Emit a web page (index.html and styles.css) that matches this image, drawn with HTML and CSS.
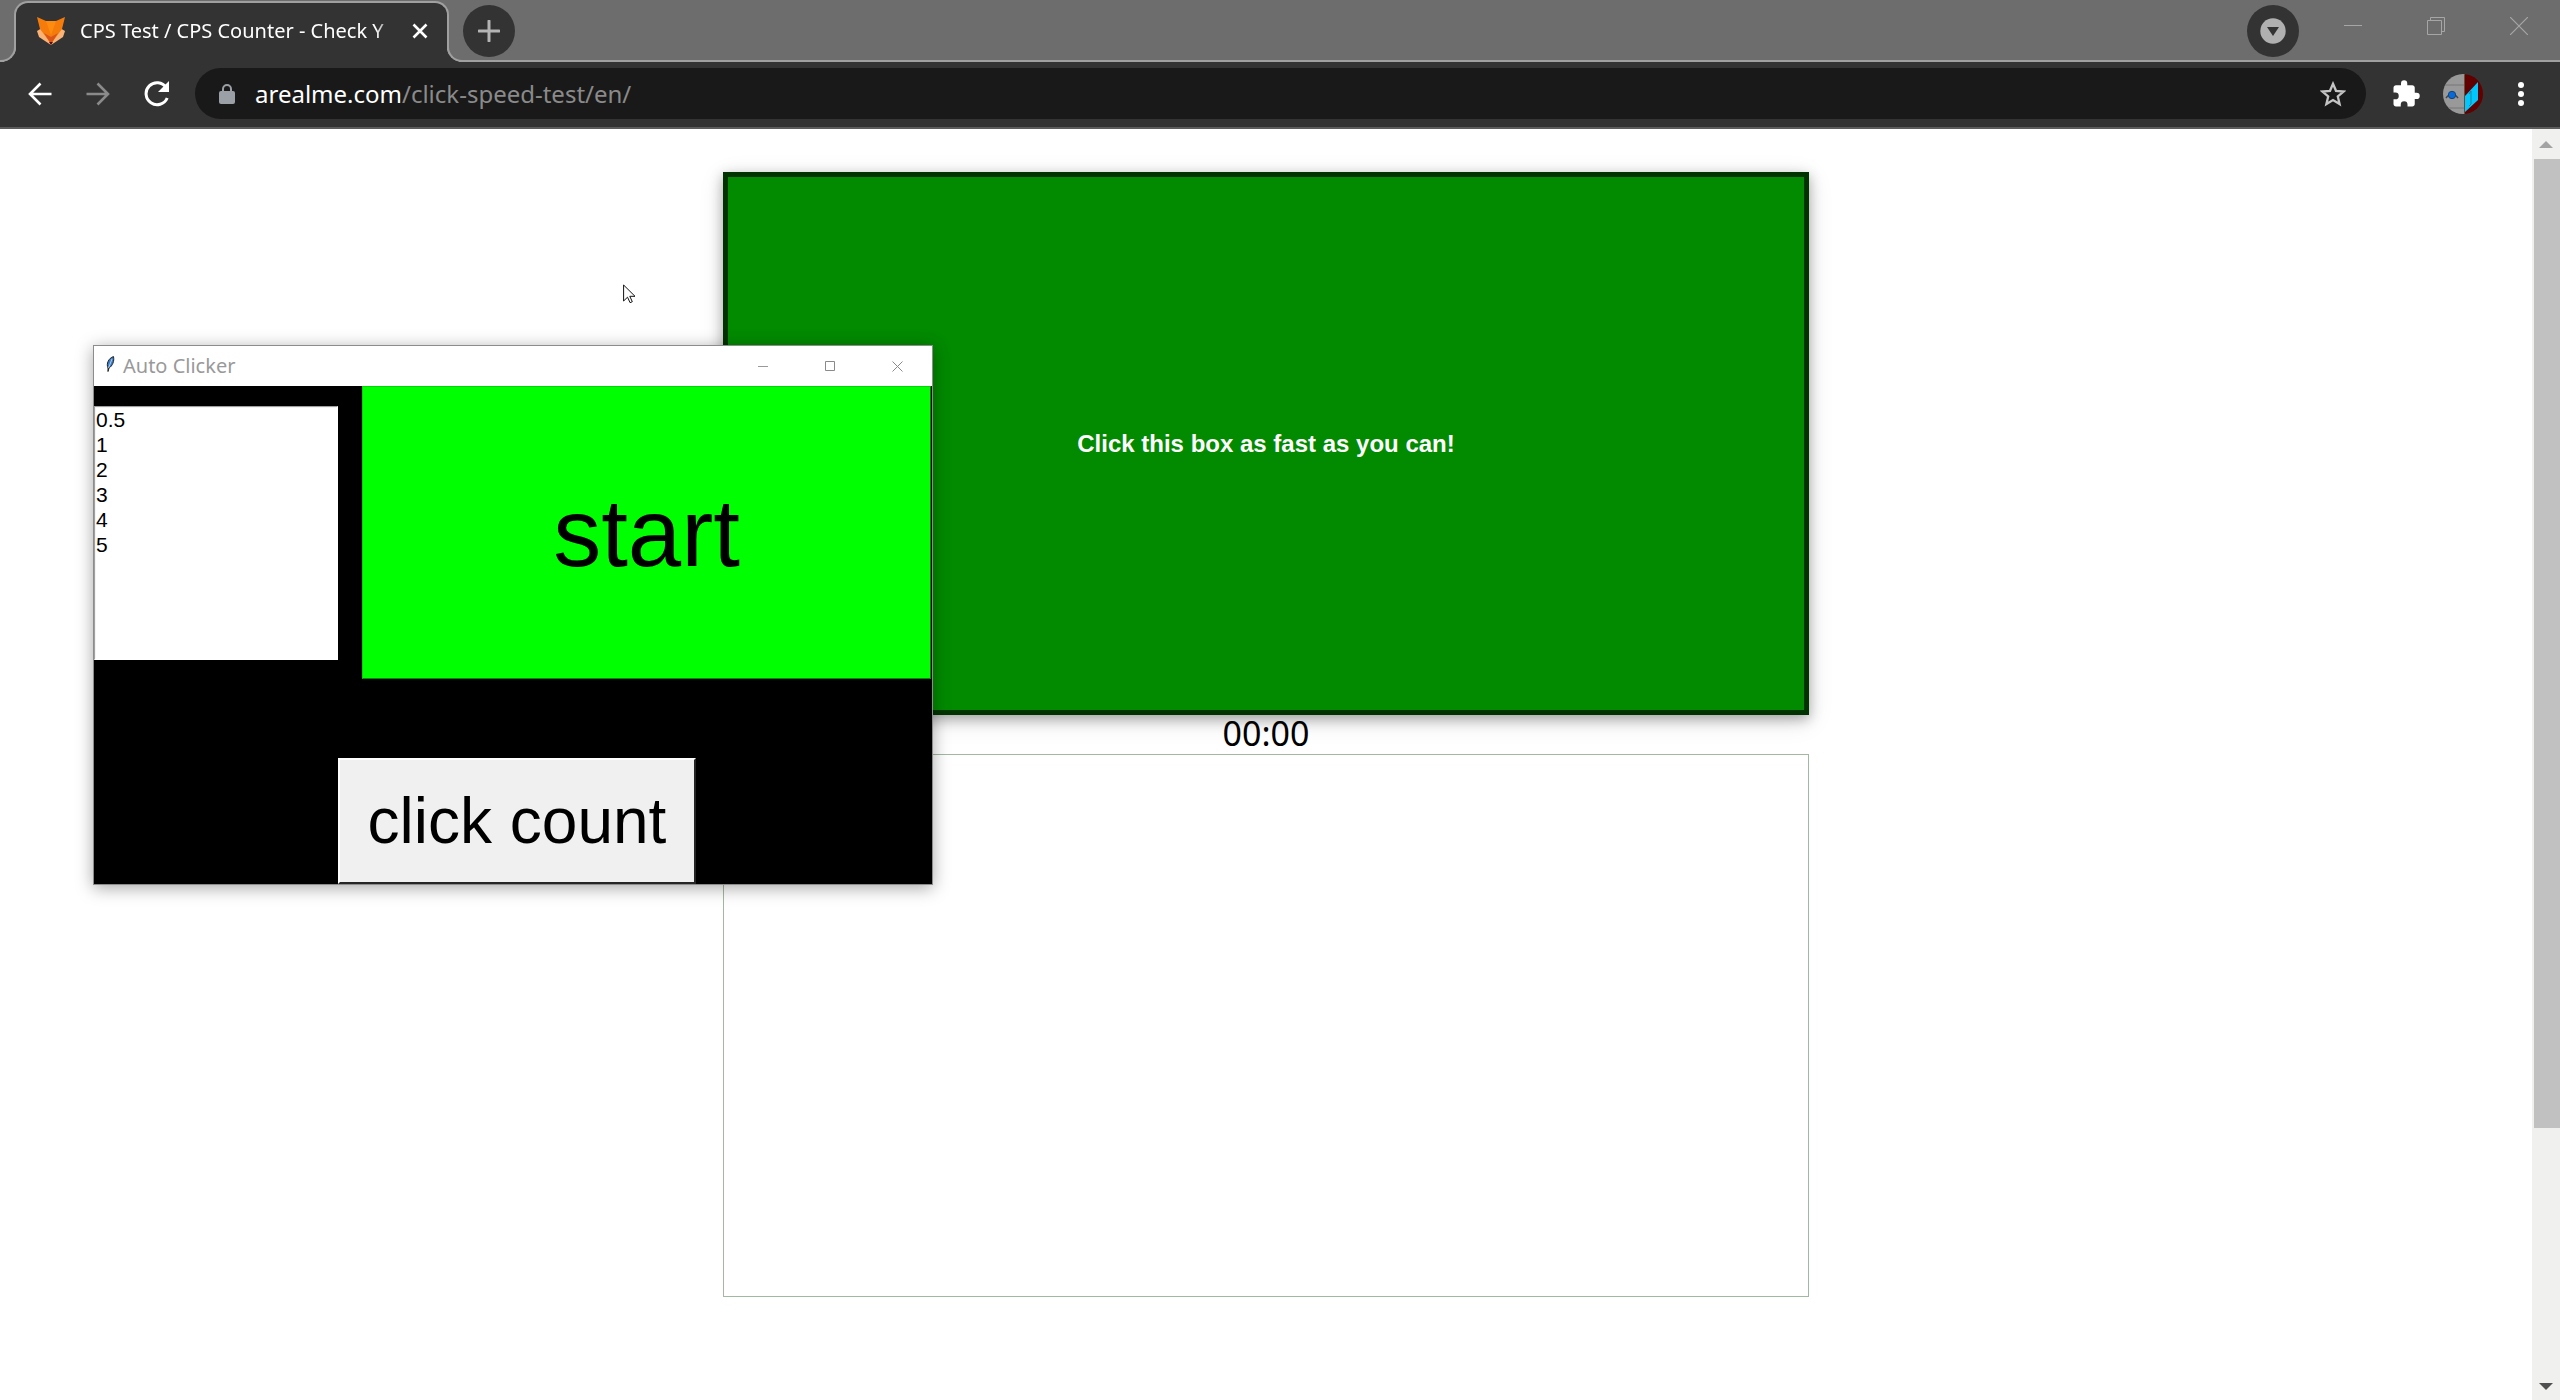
FILE: index.html
```html
<!DOCTYPE html>
<html lang="en">
<head>
<meta charset="utf-8">
<title>CPS Test / CPS Counter</title>
<link rel="stylesheet" href="styles.css">
</head>
<body>
<header class="browser">
  <div class="tabstrip">
    <div class="tab">
      <svg class="favicon" viewBox="0 0 30 28" width="30" height="28" aria-hidden="true">
        <path d="M1 14L6 11h18l5 3-2 6-12 8L3 20z" fill="#f9b377"/>
        <path d="M1 0l9 4h10l9-4-3 12-6 8-5 7-5-7-6-8z" fill="#f57c0a"/>
        <path d="M10 4h10l-5 14z" fill="#ff8c10"/>
        <path d="M8 16l5 8 2 3 2-3 5-8-7 4z" fill="#d9541a"/>
        <path d="M13 25h4l-2 3z" fill="#5a0d0d"/>
      </svg>
      <span class="tab-title">CPS Test / CPS Counter - Check Y</span>
      <button class="icon-btn tab-close" aria-label="Close tab"><svg viewBox="0 0 16 16" width="16" height="16"><path d="M1.500 1.500l13 13M14.500 1.500l-13 13" stroke="#fff" stroke-width="2.600"/></svg></button>
    </div>
    <button class="icon-btn round" aria-label="New tab"><svg viewBox="0 0 22 22" width="22" height="22"><path d="M11 1v20M1 11h20" stroke="#b4b4b4" stroke-width="3" stroke-linecap="round"/></svg></button>
    <div class="spacer"></div>
    <button class="icon-btn round search-tabs" aria-label="Search tabs"><svg viewBox="0 0 26 26" width="26" height="26"><circle cx="13" cy="13" r="12.700" fill="#b0b0b0"/><path d="M7 9h12l-6 9z" fill="#333"/></svg></button>
    <div class="caption">
      <button class="icon-btn" aria-label="Minimize"><svg viewBox="0 0 18 18" width="18" height="18"><path d="M0 8.500h18" stroke="#a6a6a6"/></svg></button>
      <button class="icon-btn" aria-label="Restore"><svg viewBox="0 0 18 18" width="18" height="18"><path d="M.5 3.500h14v14H.5zM3.500 3.500v-3h14v14h-3" fill="none" stroke="#a6a6a6"/></svg></button>
      <button class="icon-btn" aria-label="Close"><svg viewBox="0 0 18 18" width="18" height="18"><path d="M0 0l18 18M18 0L0 18" stroke="#a6a6a6" stroke-width="1.200"/></svg></button>
    </div>
  </div>
  <div class="toolbar">
    <nav class="nav">
      <button class="icon-btn" aria-label="Back"><svg viewBox="0 0 24 24" width="24" height="24"><path d="M23.500 12H2M12.500 1.500L2 12l10.500 10.500" fill="none" stroke="#fff" stroke-width="2.600"/></svg></button>
      <button class="icon-btn" aria-label="Forward"><svg viewBox="0 0 24 24" width="24" height="24"><path d="M.5 12H22M11.500 1.500L22 12 11.500 22.500" fill="none" stroke="#8a8a8a" stroke-width="2.600"/></svg></button>
      <button class="icon-btn" aria-label="Reload"><svg viewBox="0 0 26 26" width="26" height="26"><path d="M22.200 6.500A11 11 0 1 0 23.200 17" fill="none" stroke="#fff" stroke-width="3"/><path d="M25 0v11H14z" fill="#fff"/></svg></button>
    </nav>
    <div class="address">
      <svg class="lock" viewBox="0 0 16 20" width="16" height="20" aria-hidden="true"><rect y="7" width="16" height="13" rx="2" fill="#9aa0a6"/><path d="M4 8V5a4 4 0 0 1 8 0v3" fill="none" stroke="#9aa0a6" stroke-width="2"/></svg>
      <a class="url" href="#"><span class="host">arealme.com</span>/click-speed-test/en/</a>
      <button class="icon-btn" aria-label="Bookmark"><svg viewBox="0 0 26 26" width="26" height="26"><path d="M13 2.800l3 7 7.600.7-5.800 5 1.800 7.500L13 19l-6.600 4 1.800-7.500-5.800-5 7.600-.7z" fill="none" stroke="#c4c4c4" stroke-width="2.300"/></svg></button>
    </div>
    <div class="actions">
      <button class="icon-btn" aria-label="Extensions"><svg viewBox="0 0 24 24" width="30" height="30"><path fill="#fff" d="M20.500 11H19V7c0-1.100-.9-2-2-2h-4V3.500a2.500 2.500 0 0 0-5 0V5H4c-1.100 0-2 .9-2 2v3.800h1.500a2.700 2.700 0 0 1 0 5.400H2V20c0 1.100.9 2 2 2h3.800v-1.500a2.700 2.700 0 0 1 5.400 0V22H17c1.100 0 2-.9 2-2v-4h1.500a2.500 2.500 0 0 0 0-5z"/></svg></button>
      <button class="icon-btn" aria-label="Profile"><svg viewBox="0 0 40 40" width="40" height="40"><clipPath id="disc"><circle cx="20" cy="20" r="20"/></clipPath><g clip-path="url(#disc)"><path fill="#999" d="M0 0h22v40H0z"/><path fill="#600000" d="M22 0h18v40H22z"/><path d="M0 11h21M0 34h21" stroke="#777"/><path d="M21.500 0v40" stroke="#674b36"/><path fill="#00c8ff" d="M22 22L35 8v18L22 38z"/><path d="M26 20l2-3v13M26 32l2-2" stroke="#248294" fill="none"/><path d="M3 24q6-8 12 0" fill="none" stroke="#444" stroke-width="1.500"/><circle cx="9" cy="21" r="3.700" fill="#0869d8" stroke="#174476"/></g></svg></button>
    </div>
    <button class="icon-btn" aria-label="Menu"><svg viewBox="0 0 6 26" width="6" height="26"><g fill="#fff"><circle cx="3" cy="4" r="3"/><circle cx="3" cy="13" r="3"/><circle cx="3" cy="22" r="3"/></g></svg></button>
  </div>
</header>

<div class="viewport">
  <main class="page">
    <button class="click-box">Click this box as fast as you can!</button>
    <div class="timer">00:00</div>
    <section class="results" aria-label="Results"></section>
  </main>
  <div class="scrollbar" aria-hidden="true">
    <svg viewBox="0 0 14 7" width="14" height="7"><path d="M7 0l7 7H0z" fill="#a3a3a3"/></svg>
    <div class="track"><div class="thumb"></div></div>
    <svg viewBox="0 0 14 7" width="14" height="7"><path d="M0 0h14L7 7z" fill="#505050"/></svg>
  </div>
</div>

<section class="window" aria-label="Auto Clicker">
  <div class="titlebar">
    <svg class="feather" viewBox="0 0 10 16" width="10" height="16" aria-hidden="true"><path d="M3 15.500V12C1 8 3.500 2 8.500.6 9.500 5 7.500 10 4 12z" fill="#3c7cc8" stroke="#222"/><path d="M3.500 12L7 3" stroke="#a8cdf0"/></svg>
    <span class="window-title">Auto Clicker</span>
    <button class="icon-btn" aria-label="Minimize window"><svg viewBox="0 0 11 11" width="11" height="11"><path d="M0 5.500h10" stroke="#999"/></svg></button>
    <button class="icon-btn" aria-label="Maximize window"><svg viewBox="0 0 11 11" width="11" height="11"><path d="M.5.500h9v9h-9z" fill="none" stroke="#8a8a8a"/></svg></button>
    <button class="icon-btn" aria-label="Close window"><svg viewBox="0 0 11 11" width="11" height="11"><path d="M.5.500l10 10M10.500.500l-10 10" stroke="#8a8a8a"/></svg></button>
  </div>
  <div class="client">
    <select class="delays" size="10" aria-label="Delay">
      <option>0.5</option><option>1</option><option>2</option><option>3</option><option>4</option><option>5</option>
    </select>
    <button class="start">start</button>
    <button class="count">click count</button>
  </div>
</section>

<svg class="cursor" viewBox="0 0 13 20" width="13" height="20" aria-hidden="true"><path d="M.6 1v16l3.900-3.800 2.600 5.500 2.200-1-2.500-5.400h5.200z" fill="#fff" stroke="#111"/></svg>
</body>
</html>
```
FILE: styles.css
```css
* { box-sizing: border-box; }

body {
  margin: 0;
  min-height: 100vh;
  display: flex;
  flex-direction: column;
  background: #fff;
  color: #000;
  font-family: "Noto Sans", sans-serif;
}

button { font: inherit; }
svg { display: block; flex: none; }

.icon-btn {
  display: grid;
  place-items: center;
  flex: none;
  padding: 0;
  border: 0;
  background: none;
}

/* Browser frame */
.tabstrip {
  display: flex;
  align-items: flex-start;
  height: 62px;
  padding-left: 14px;
  background: #6d6d6d;
  border-bottom: 2px solid #a0a0a0;
}

.tab {
  position: relative;
  display: flex;
  align-items: center;
  width: 435px;
  height: 61px;
  margin-top: 1px;
  padding: 0 19px 4px 20px;
  background: #333;
  border: 2px solid #a0a0a0;
  border-bottom: 0;
  border-radius: 14px 14px 0 0;
}

.tab::before,
.tab::after {
  content: "";
  position: absolute;
  bottom: 0;
  width: 15px;
  height: 15px;
  border: 2px solid #a0a0a0;
}

.tab::before {
  right: 100%;
  border-width: 0 2px 2px 0;
  border-bottom-right-radius: 15px;
  box-shadow: 5px 5px 0 #333;
  clip-path: inset(0 -2px 0 0);
}

.tab::after {
  left: 100%;
  border-width: 0 0 2px 2px;
  border-bottom-left-radius: 15px;
  box-shadow: -5px 5px 0 #333;
  clip-path: inset(0 0 0 -2px);
}

.tab-title {
  flex: 1;
  margin: 0 14px;
  white-space: nowrap;
  color: #fff;
  font-size: 20px;
  line-height: 28px;
  -webkit-mask-image: linear-gradient(to right, #000 93%, transparent 99%);
  mask-image: linear-gradient(to right, #000 93%, transparent 99%);
}

.round {
  width: 52px;
  height: 52px;
  margin: 5px 0 0 14px;
  border-radius: 50%;
  background: #333;
}

.search-tabs { margin-right: 12px; }
.spacer { flex: 1; }
.caption { display: flex; }
.caption .icon-btn { width: 83px; height: 52px; }

.toolbar {
  display: flex;
  align-items: center;
  height: 67px;
  padding: 0 36px 2px 28px;
  background: #333;
  border-bottom: 2px solid #5c5c5c;
  gap: 25px;
}

.nav { display: flex; align-items: center; gap: 34px; }
.actions { display: flex; align-items: center; gap: 22px; margin-right: 10px; }

.address {
  flex: 1;
  display: flex;
  align-items: center;
  height: 51px;
  padding: 0 20px 0 24px;
  border-radius: 26px;
  background: #191919;
}

.url {
  flex: 1;
  margin-left: 20px;
  color: #8a8a8a;
  font-size: 24px;
  line-height: 32px;
  text-decoration: none;
}

.host { color: #fff; }

/* Page */
.viewport { flex: 1; display: flex; }

.page {
  flex: 1;
  display: flex;
  flex-direction: column;
  align-items: center;
  padding: 43px 24px 48px;
}

.click-box {
  width: 100%;
  max-width: 1086px;
  aspect-ratio: 2;
  border: 5px solid #030;
  background: #028a00;
  color: #fff;
  font: bold 24px "Liberation Sans", Arial, sans-serif;
  box-shadow: 0 4px 12px rgba(0, 0, 0, .3), 0 6px 24px rgba(0, 0, 0, .12);
}

.timer {
  padding-bottom: 3px;
  font-size: 34px;
  line-height: 36px;
}

.results {
  width: 100%;
  max-width: 1086px;
  aspect-ratio: 2;
  border: 1px solid #a3b8a3;
}

.scrollbar {
  display: flex;
  flex-direction: column;
  align-items: center;
  width: 28px;
  padding: 12px 0 10px;
  background: #f0f0ef;
}

.track { flex: 1; align-self: stretch; padding: 11px 0 28px 2px; }
.thumb { height: 81%; background: #c1c1c1; }

/* Auto Clicker window, floating over the page */
.window {
  position: absolute;
  left: 93px;
  top: 345px;
  width: 840px;
  border: 1px solid #8c8c8c;
  box-shadow: 0 3px 16px rgba(0, 0, 0, .35);
}

.titlebar {
  display: flex;
  align-items: center;
  height: 40px;
  padding-right: 1px;
  background: #fff;
}

.feather { margin: 0 8px 4px 11px; }

.window-title {
  flex: 1;
  color: #999;
  font-size: 20px;
  line-height: 28px;
}

.titlebar .icon-btn { width: 67px; height: 38px; }

.client {
  display: grid;
  grid-template-columns: 244px 24px 334px 1fr;
  grid-template-rows: 293px 126px;
  row-gap: 79px;
  padding-right: 1px;
  background: #000;
}

.delays {
  grid-area: 1 / 1;
  height: 254px;
  margin-top: 20px;
  padding: 0;
  overflow: hidden;
  border: 2px solid #fff;
  border-top: 2px groove #f4f4f4;
  border-left: 2px groove #f4f4f4;
  border-radius: 0;
  background: #fff;
  color: #000;
  font: 21px "Liberation Sans", Arial, sans-serif;
}

.delays option { height: 25px; min-height: 0; padding: 0; }

.start,
.count {
  padding: 0;
  border-radius: 0;
  color: #000;
  font-family: "Liberation Sans", Arial, sans-serif;
}

.start {
  grid-area: 1 / 3 / 2 / 5;
  border: 1px solid #00d000;
  border-color: #00d800 #008a00 #008a00 #00d800;
  background: #0f0;
  font-size: 96px;
}

.count {
  grid-area: 2 / 2 / 3 / 4;
  border: 2px outset #f0f0f0;
  border-color: #fff #7a7a7a #7a7a7a #fff;
  background: #f0f0f0;
  font-size: 64px;
}

.cursor {
  position: absolute;
  left: 623px;
  top: 284px;
}
```
